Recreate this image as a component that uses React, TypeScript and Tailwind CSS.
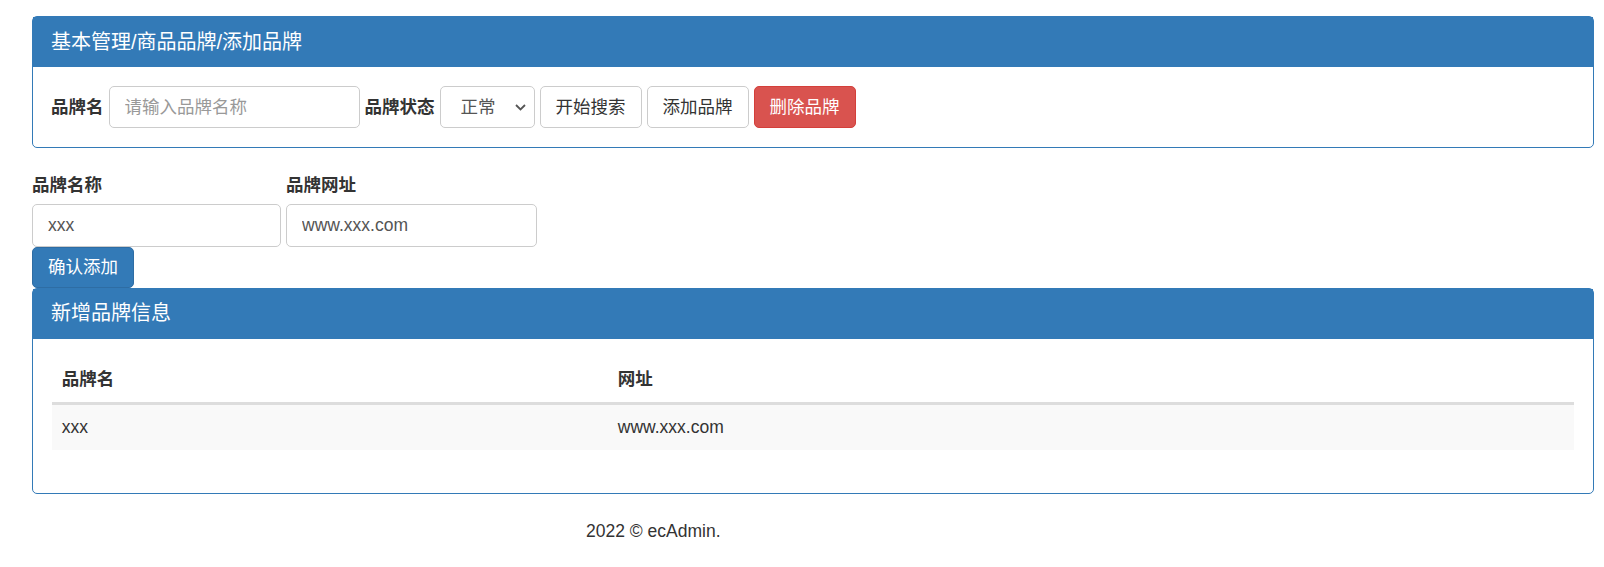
// 添加品牌页面

export default function App() {
  return (
    <div className="min-h-screen bg-white text-[#333] text-[17.5px] leading-[25px] font-['Liberation_Sans','Noto_Sans_CJK_SC',sans-serif] pt-[16px] pl-[32px] pr-[10px]">
      {/* 搜索面板 */}
      <div className="border border-[#337ab7] rounded-[5px] mb-[25px]">
        <div className="bg-[#337ab7] text-white text-[20px] px-[18px] py-[12.5px]">基本管理/商品品牌/添加品牌</div>
        <div className="px-[18px] py-[18.75px] flex items-center gap-[5px]">
          <label className="font-bold">品牌名</label>
          <input
            type="text"
            placeholder="请输入品牌名称"
            className="w-[251px] h-[42.5px] px-[15px] border border-[#ccc] rounded-[5px] text-[#555] placeholder-[#999] outline-none"
          />
          <label className="font-bold">品牌状态</label>
          <div className="relative">
            <select
              defaultValue="正常"
              className="appearance-none w-[95px] h-[42.5px] pl-[20px] pr-[30px] border border-[#ccc] rounded-[5px] text-[#555] bg-white outline-none"
            >
              <option>正常</option>
              <option>禁用</option>
            </select>
            <svg
              className="absolute right-[9px] top-[18px] pointer-events-none"
              width="11"
              height="7"
              viewBox="0 0 11 7"
            >
              <path d="M1 1l4.5 4.5L10 1" stroke="#555" strokeWidth="1.8" fill="none" />
            </svg>
          </div>
          <button className="h-[42.5px] px-[15px] border border-[#ccc] rounded-[5px] bg-white text-[#333]">开始搜索</button>
          <button className="h-[42.5px] px-[15px] border border-[#ccc] rounded-[5px] bg-white text-[#333]">添加品牌</button>
          <button className="h-[42.5px] px-[15px] border border-[#d43f3a] rounded-[5px] bg-[#d9534f] text-white">删除品牌</button>
        </div>
      </div>

      {/* 添加表单 */}
      <div className="flex gap-[5px]">
        <div className="flex flex-col">
          <label className="font-bold mb-[6px]">品牌名称</label>
          <input
            type="text"
            defaultValue="xxx"
            className="w-[249px] h-[42.5px] px-[15px] border border-[#ccc] rounded-[5px] text-[#555] outline-none"
          />
        </div>
        <div className="flex flex-col">
          <label className="font-bold mb-[6px]">品牌网址</label>
          <input
            type="text"
            defaultValue="www.xxx.com"
            className="w-[251px] h-[42.5px] px-[15px] border border-[#ccc] rounded-[5px] text-[#555] outline-none"
          />
        </div>
      </div>
      <button className="h-[41px] px-[15px] border border-[#2e6da4] rounded-[5px] bg-[#337ab7] text-white">确认添加</button>

      {/* 新增品牌信息 */}
      <div className="border border-[#337ab7] rounded-[5px]">
        <div className="bg-[#337ab7] text-white text-[20px] px-[18px] py-[12.5px]">新增品牌信息</div>
        <div className="p-[18.75px]">
          <table className="w-full mb-[24px] border-collapse">
            <thead>
              <tr>
                <th className="w-[556px] text-left font-bold p-[10px] border-b-[3px] border-[#ddd]">品牌名</th>
                <th className="text-left font-bold p-[10px] border-b-[3px] border-[#ddd]">网址</th>
              </tr>
            </thead>
            <tbody>
              <tr className="bg-[#f9f9f9]">
                <td className="p-[10px]">xxx</td>
                <td className="p-[10px]">www.xxx.com</td>
              </tr>
            </tbody>
          </table>
        </div>
      </div>

      <footer className="pl-[554px] pt-[25px] pb-[20px]">2022 © ecAdmin.</footer>
    </div>
  );
}
